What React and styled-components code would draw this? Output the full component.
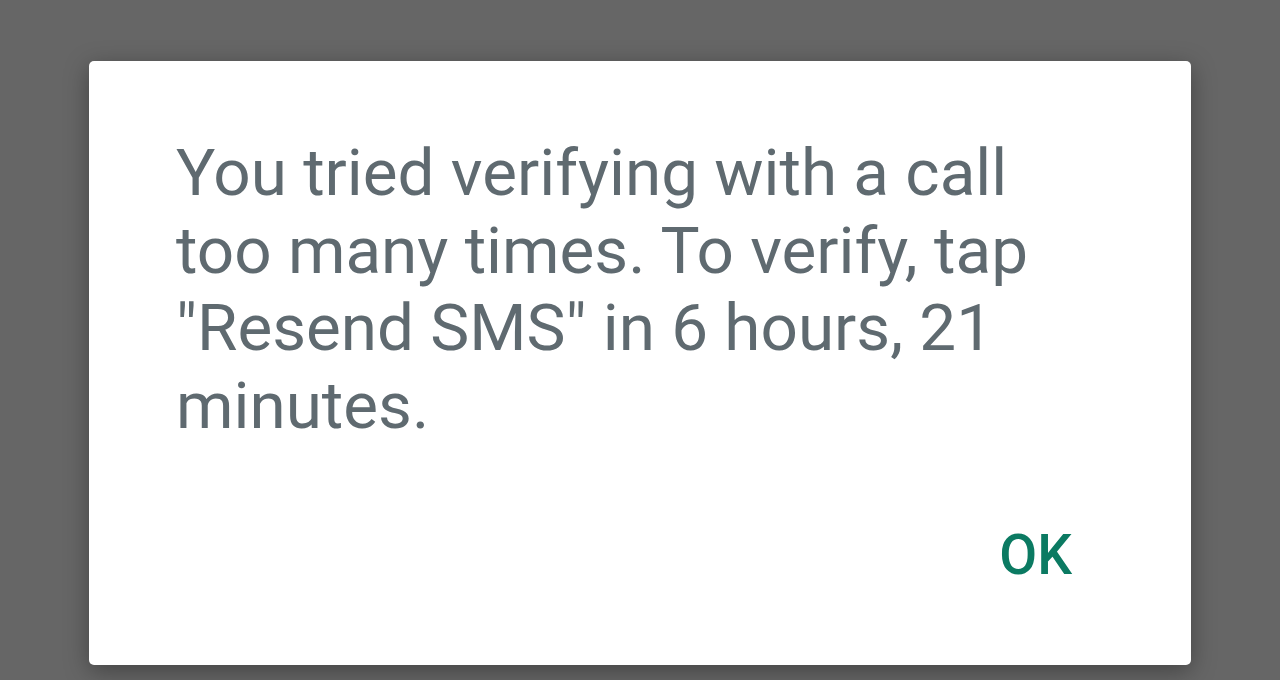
import styled, { createGlobalStyle } from 'styled-components';

const GlobalStyle = createGlobalStyle`
	html, body {
		margin: 0;
		padding: 0;
	}
	body {
		background: #666666;
		font-family: Roboto, 'Noto Sans', sans-serif;
	}
`;

const Screen = styled.div`
	width: 1280px;
	height: 680px;
	background: #666666;
	display: flex;
	justify-content: center;
	padding-top: 61px;
	box-sizing: border-box;
	overflow: hidden;
`;

const Dialog = styled.div`
	width: 1102px;
	height: 604px;
	background: #ffffff;
	border-radius: 5px;
	box-shadow: 0 6px 24px rgba(0, 0, 0, 0.35);
	box-sizing: border-box;
	padding: 73px 100px 0 87px;
	display: flex;
	flex-direction: column;
`;

const Message = styled.p`
	margin: 0;
	font-family: Roboto, sans-serif;
	font-size: 65.6px;
	line-height: 77.7px;
	color: #5f6a70;
`;

const Actions = styled.div`
	display: flex;
	justify-content: flex-end;
	margin-top: auto;
	padding-right: 19px;
	padding-bottom: 82px;
`;

const TextButton = styled.button`
	border: none;
	background: none;
	padding: 0;
	font-family: Roboto, sans-serif;
	font-weight: 500;
	font-size: 55px;
	line-height: 1;
	color: #0b7a62;
	cursor: pointer;
`;

export default function App() {
	return (
		<>
			<GlobalStyle />
			<Screen>
				<Dialog>
					<Message>
						You tried verifying with a call too many times. To verify, tap "Resend SMS" in 6 hours, 21 minutes.
					</Message>
					<Actions>
						<TextButton type='button'>OK</TextButton>
					</Actions>
				</Dialog>
			</Screen>
		</>
	);
}
